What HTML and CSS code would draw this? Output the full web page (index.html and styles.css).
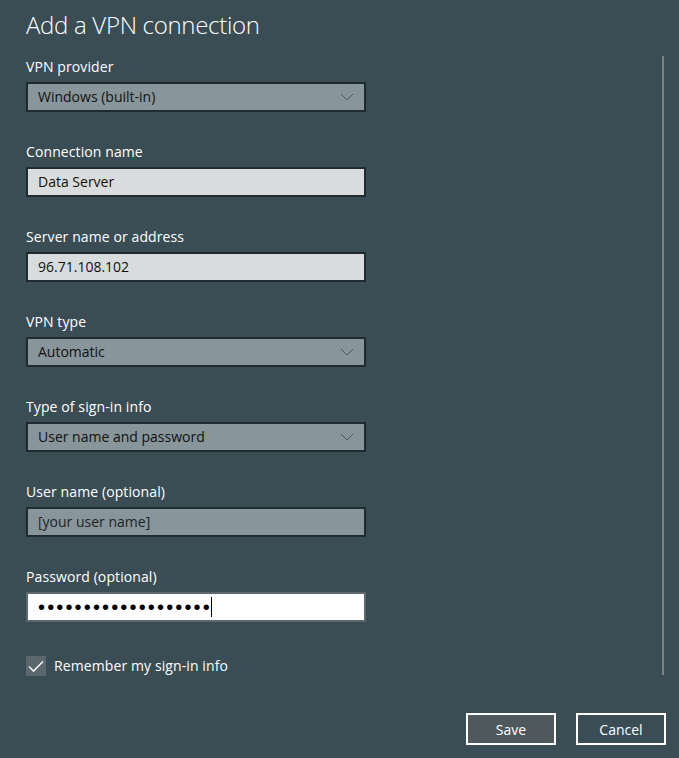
FILE: index.html
```html
<!DOCTYPE html>
<html>
<head>
<meta charset="utf-8">
<link rel="stylesheet" href="styles.css">
</head>
<body>
<div class="dialog">
  <h1 class="title">Add a VPN connection</h1>
  <div class="form">
    <div class="field">
      <div class="label">VPN provider</div>
      <div class="box select"><span>Windows (built-in)</span><svg class="chev" width="14" height="8" viewBox="0 0 14 8"><path d="M1 1 L7 7 L13 1" fill="none" stroke="#4b575c" stroke-width="1"/></svg></div>
    </div>
    <div class="field">
      <div class="label">Connection name</div>
      <div class="box text"><span>Data Server</span></div>
    </div>
    <div class="field">
      <div class="label">Server name or address</div>
      <div class="box text"><span>96.71.108.102</span></div>
    </div>
    <div class="field">
      <div class="label">VPN type</div>
      <div class="box select"><span>Automatic</span><svg class="chev" width="14" height="8" viewBox="0 0 14 8"><path d="M1 1 L7 7 L13 1" fill="none" stroke="#4b575c" stroke-width="1"/></svg></div>
    </div>
    <div class="field">
      <div class="label">Type of sign-in info</div>
      <div class="box select"><span>User name and password</span><svg class="chev" width="14" height="8" viewBox="0 0 14 8"><path d="M1 1 L7 7 L13 1" fill="none" stroke="#4b575c" stroke-width="1"/></svg></div>
    </div>
    <div class="field">
      <div class="label">User name (optional)</div>
      <div class="box disabled"><span>[your user name]</span></div>
    </div>
    <div class="field">
      <div class="label">Password (optional)</div>
      <div class="box password"><span class="dots">•••••••••••••••••••</span><span class="caret"></span></div>
    </div>
    <div class="check-row">
      <div class="checkbox"><svg width="20" height="20" viewBox="0 0 20 20"><path d="M3 10.5 L7.5 15 L17 5.5" fill="none" stroke="#f2f2f2" stroke-width="1.6"/></svg></div>
      <span class="check-label">Remember my sign-in info</span>
    </div>
  </div>
  <div class="buttons">
    <button class="btn save">Save</button>
    <button class="btn cancel">Cancel</button>
  </div>
  <div class="scrollbar"></div>
</div>
</body>
</html>
```
FILE: styles.css
```css
html, body {
  margin: 0;
  padding: 0;
  background: #3a4d55;
}
body {
  width: 679px;
  height: 758px;
  overflow: hidden;
  font-family: "Open Sans", "Noto Sans", sans-serif;
}
.dialog {
  position: relative;
  height: 758px;
  padding: 9px 0 0 26px;
  box-sizing: border-box;
}
.title {
  margin: 0;
  font-size: 24px;
  line-height: 32px;
  font-weight: 300;
  color: #ffffff;
  letter-spacing: -0.3px;
}
.form {
  display: flex;
  flex-direction: column;
  margin-top: 16px;
}
.field {
  display: flex;
  flex-direction: column;
  gap: 5px;
  margin-bottom: 30px;
}
.label {
  font-size: 14px;
  line-height: 20px;
  color: #ffffff;
  letter-spacing: 0.1px;
}
.box {
  width: 340px;
  height: 30px;
  box-sizing: border-box;
  border: 2px solid #1f2b30;
  display: flex;
  align-items: center;
  padding: 0 10px 1px 10px;
  font-size: 14px;
  color: #111;
}
.select {
  background: #88959a;
  justify-content: space-between;
}
.text {
  background: #d8dcdc;
}
.disabled {
  background: #88959a;
  color: #1d2427;
}
.password {
  background: #ffffff;
  border-color: #5f686c;
  padding-bottom: 0;
}
.dots {
  font-family: "Liberation Sans", sans-serif;
  font-size: 20px;
  letter-spacing: 2.15px;
  color: #000;
  line-height: 20px;
}
.caret {
  width: 1px;
  height: 20px;
  background: #000;
  margin-left: -1px;
}
.check-row {
  display: flex;
  align-items: center;
  gap: 8px;
  margin-top: 4px;
}
.checkbox {
  width: 20px;
  height: 20px;
  background: #5a686e;
  display: flex;
}
.check-label {
  font-size: 14px;
  color: #ffffff;
  line-height: 20px;
  letter-spacing: 0.1px;
}
.buttons {
  position: absolute;
  right: 13px;
  top: 713px;
  display: flex;
  gap: 20px;
}
.btn {
  width: 90px;
  height: 32px;
  box-sizing: border-box;
  border: 2px solid #ffffff;
  font-family: "Open Sans", "Noto Sans", sans-serif;
  font-size: 14px;
  color: #ffffff;
  padding: 0;
}
.save {
  background: #4f585d;
}
.cancel {
  background: #3a4d55;
}
.scrollbar {
  position: absolute;
  left: 662px;
  top: 56px;
  width: 2px;
  height: 619px;
  background: #7f8284;
}
```
